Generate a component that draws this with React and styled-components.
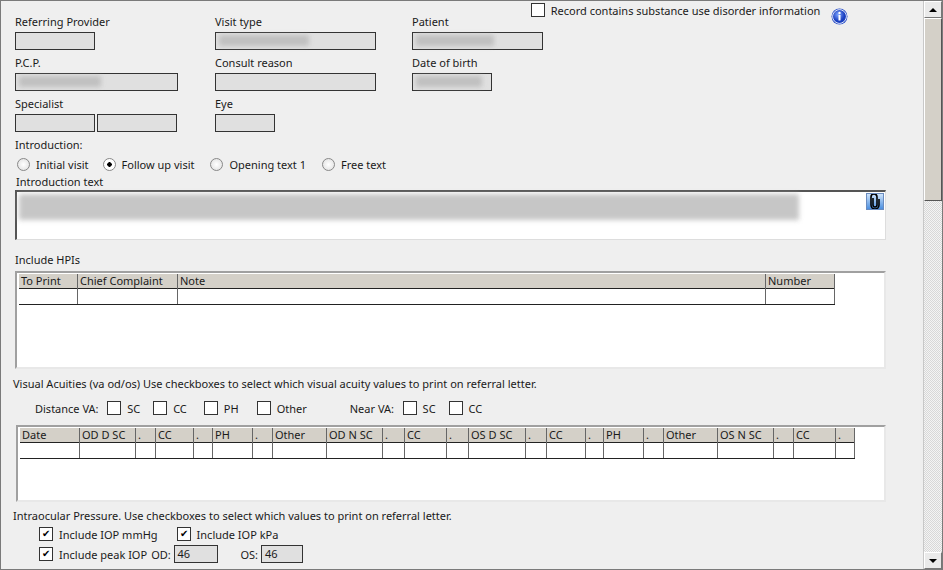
import React from "react";
import styled, { createGlobalStyle } from "styled-components";

const G = createGlobalStyle`
  body{margin:0;background:#efefef;font-family:"Noto Sans","Open Sans",sans-serif;font-size:11px;color:#1a1a1a;}
  *{box-sizing:border-box;}
`;
const Win = styled.div`width:943px;height:570px;border:1px solid #7a7a7a;display:flex;background:#efefef;overflow:hidden;`;
const Content = styled.div`flex:1;position:relative;padding:13px 0 0 14px;overflow:hidden;`;
const Scroll = styled.div`width:19px;display:flex;flex-direction:column;border-left:1px solid #c8c8c8;
  background:repeating-conic-gradient(#d8d8d8 0 25%,#f4f4f4 0 50%) 0 0/2px 2px;`;
const Arrow = styled.div`height:17px;background:#eaeaea;border:1px solid;border-color:#fff #777 #777 #fff;display:flex;align-items:center;justify-content:center;
  &::after{content:"";border-left:4px solid transparent;border-right:4px solid transparent;${p=>p.down?"border-top:4px solid #000;":"border-bottom:4px solid #000;"}}`;
const Thumb = styled.div`height:183px;background:#d4d0c8;border:1px solid;border-color:#fff #555 #555 #fff;`;
const Spacer = styled.div`flex:1;`;
const Fields = styled.div`display:grid;grid-template-columns:200px 197px 200px;row-gap:5px;`;
const Field = styled.div`display:flex;flex-direction:column;`;
const Label = styled.div`height:16px;line-height:16px;margin-bottom:2px;`;
const Inputs = styled.div`display:flex;gap:2px;`;
const Input = styled.div`width:${p=>p.w}px;height:18px;background:#e0e0e0;border:1px solid #333;padding:2px 3px;font-size:11px;line-height:12px;`;
const Blur = styled.div`width:${p=>p.w}px;height:${p=>p.h||11}px;background:#b8b8b8;filter:blur(2.5px);opacity:.8;`;
const Line = styled.div`height:16px;line-height:16px;margin-top:${p=>p.mt||0}px;padding-left:${p=>p.pl||0}px;`;
const Row = styled.div`display:flex;align-items:center;height:16px;margin-top:${p=>p.mt||0}px;padding-left:${p=>p.pl||0}px;`;
const Radio = styled.span`display:inline-flex;align-items:center;gap:6px;margin-right:${p=>p.mr}px;
  &::before{content:"";width:11px;height:11px;border-radius:50%;border:1px solid #888;background:${p=>p.on?"radial-gradient(circle,#000 0 2px,#fff 2.5px)":"radial-gradient(circle,#fff,#ddd)"};}`;
const Check = styled.span`display:inline-flex;align-items:center;gap:6px;margin-right:${p=>p.mr||0}px;
  &::before{content:"${p=>p.on?"✔":""}";width:12px;height:12px;border:1px solid #333;background:#fff;font-size:10px;line-height:10px;text-align:center;color:#000;}`;
const TextArea = styled.div`position:relative;width:871px;height:50px;margin-top:0;background:#fff;border:1px solid #ddd;border-top:2px solid #555;border-left:2px solid #555;padding:2px 0 0 2px;`;
const Clip = styled.div`position:absolute;right:1px;top:1px;width:18px;height:17px;background:linear-gradient(#cfe4fb,#4b8fe0);border:1px solid #6a8cc0;display:flex;align-items:center;justify-content:center;`;
const Frame = styled.div`width:${p=>p.w}px;height:${p=>p.h}px;margin-top:${p=>p.mt||0}px;background:#fff;border:2px solid;border-color:#a0a0a0 #e8e8e8 #e8e8e8 #a0a0a0;padding:1px 0 0 2px;`;
const Grid = styled.div`display:flex;width:fit-content;border-bottom:1px solid #222;`;
const Col = styled.div`width:${p=>p.w}px;display:flex;flex-direction:column;border-right:1px solid #666;`;
const Head = styled.div`height:15px;line-height:14px;background:#d4d0c8;border-bottom:1px solid #222;padding-left:2px;white-space:nowrap;overflow:hidden;`;
const Cell = styled.div`height:15px;`;
const Info = styled.div`position:absolute;left:830px;top:7px;`;
const Sub = styled.div`position:absolute;left:530px;top:1px;`;

const hpi=[["To Print",59],["Chief Complaint",100],["Note",588],["Number",69]];
const va=[["Date",60],["OD D SC",56],[".",20],["CC",38],[".",19],["PH",40],[".",20],["Other",54],["OD N SC",56],[".",22],["CC",42],[".",22],["OS D SC",57],[".",21],["CC",39],[".",18],["PH",40],[".",20],["Other",54],["OS N SC",56],[".",20],["CC",42],[".",19]];
const Table=({cols})=>(<Grid>{cols.map(([t,w],i)=>(<Col key={i} w={w}><Head>{t}</Head><Cell/></Col>))}</Grid>);

export default function App(){
  return (<Win><G/>
    <Content>
      <Sub><Row><Check mr={0}/>&nbsp;&nbsp;Record contains substance use disorder information</Row></Sub>
      <Info><svg width="17" height="17" viewBox="0 0 17 17"><defs><radialGradient id="b" cx="40%" cy="35%"><stop offset="0" stopColor="#7fa6ff"/><stop offset="1" stopColor="#1a3fc0"/></radialGradient></defs><circle cx="8.5" cy="8.5" r="8" fill="#2a4fc8"/><circle cx="8.5" cy="8.5" r="6.8" fill="none" stroke="#fff" strokeWidth="1"/><circle cx="8.5" cy="8.5" r="6.2" fill="url(#b)"/><circle cx="8.5" cy="5" r="1.2" fill="#fff"/><rect x="7.5" y="7" width="2" height="5.5" fill="#fff"/></svg></Info>
      <Fields>
        <Field><Label>Referring Provider</Label><Input w={80}/></Field>
        <Field><Label>Visit type</Label><Input w={161}><Blur w={90}/></Input></Field>
        <Field><Label>Patient</Label><Input w={131}><Blur w={78}/></Input></Field>
        <Field><Label>P.C.P.</Label><Input w={163}><Blur w={82}/></Input></Field>
        <Field><Label>Consult reason</Label><Input w={161}/></Field>
        <Field><Label>Date of birth</Label><Input w={80}><Blur w={66}/></Input></Field>
        <Field><Label>Specialist</Label><Inputs><Input w={80}/><Input w={80}/></Inputs></Field>
        <Field><Label>Eye</Label><Input w={60}/></Field>
      </Fields>
      <Line mt={5}>Introduction:</Line>
      <Row mt={3} pl={2}><Radio mr={14}>Initial visit</Radio><Radio on mr={16}>Follow up visit</Radio><Radio mr={16}>Opening text 1</Radio><Radio mr={0}>Free text</Radio></Row>
      <Line mt={2} pl={1}>Introduction text</Line>
      <TextArea><Blur w={780} h={26}/>
        <Clip><svg width="10" height="15" viewBox="0 0 10 15"><path d="M3 4v7a2 2 0 0 0 4 0V3a3 3 0 0 0-6 0v8a4 4 0 0 0 8 0V5" fill="none" stroke="#000" strokeWidth="1.6"/></svg></Clip>
      </TextArea>
      <Line mt={12}>Include HPIs</Line>
      <Frame w={871} h={98} mt={3}><Table cols={hpi}/></Frame>
      <Line mt={7} style={{marginLeft:-2}}>Visual Acuities (va od/os) Use checkboxes to select which visual acuity values to print on referral letter.</Line>
      <Row mt={8} pl={20}>Distance VA:&nbsp;&nbsp;&nbsp;<Check mr={13}>SC</Check><Check mr={17}>CC</Check><Check mr={18}>PH</Check><Check mr={43}>Other</Check>Near VA:&nbsp;&nbsp;&nbsp;<Check mr={13}>SC</Check><Check>CC</Check></Row>
      <Frame w={870} h={77} mt={9} style={{marginLeft:1}}><Table cols={va}/></Frame>
      <Line mt={6} style={{marginLeft:-2}}>Intraocular Pressure. Use checkboxes to select which values to print on referral letter.</Line>
      <Row mt={2} pl={24}><Check on mr={19}>Include IOP mmHg</Check><Check on>Include IOP kPa</Check></Row>
      <Row mt={4} pl={24}><Check on mr={4}>Include peak IOP</Check>OD:&nbsp;<Input w={44}>46</Input>&nbsp;&nbsp;&nbsp;&nbsp;&nbsp;&nbsp;&nbsp;&nbsp;OS:&nbsp;<Input w={42}>46</Input></Row>
    </Content>
    <Scroll><Arrow/><Thumb/><Spacer/><Arrow down/></Scroll>
  </Win>);
}
